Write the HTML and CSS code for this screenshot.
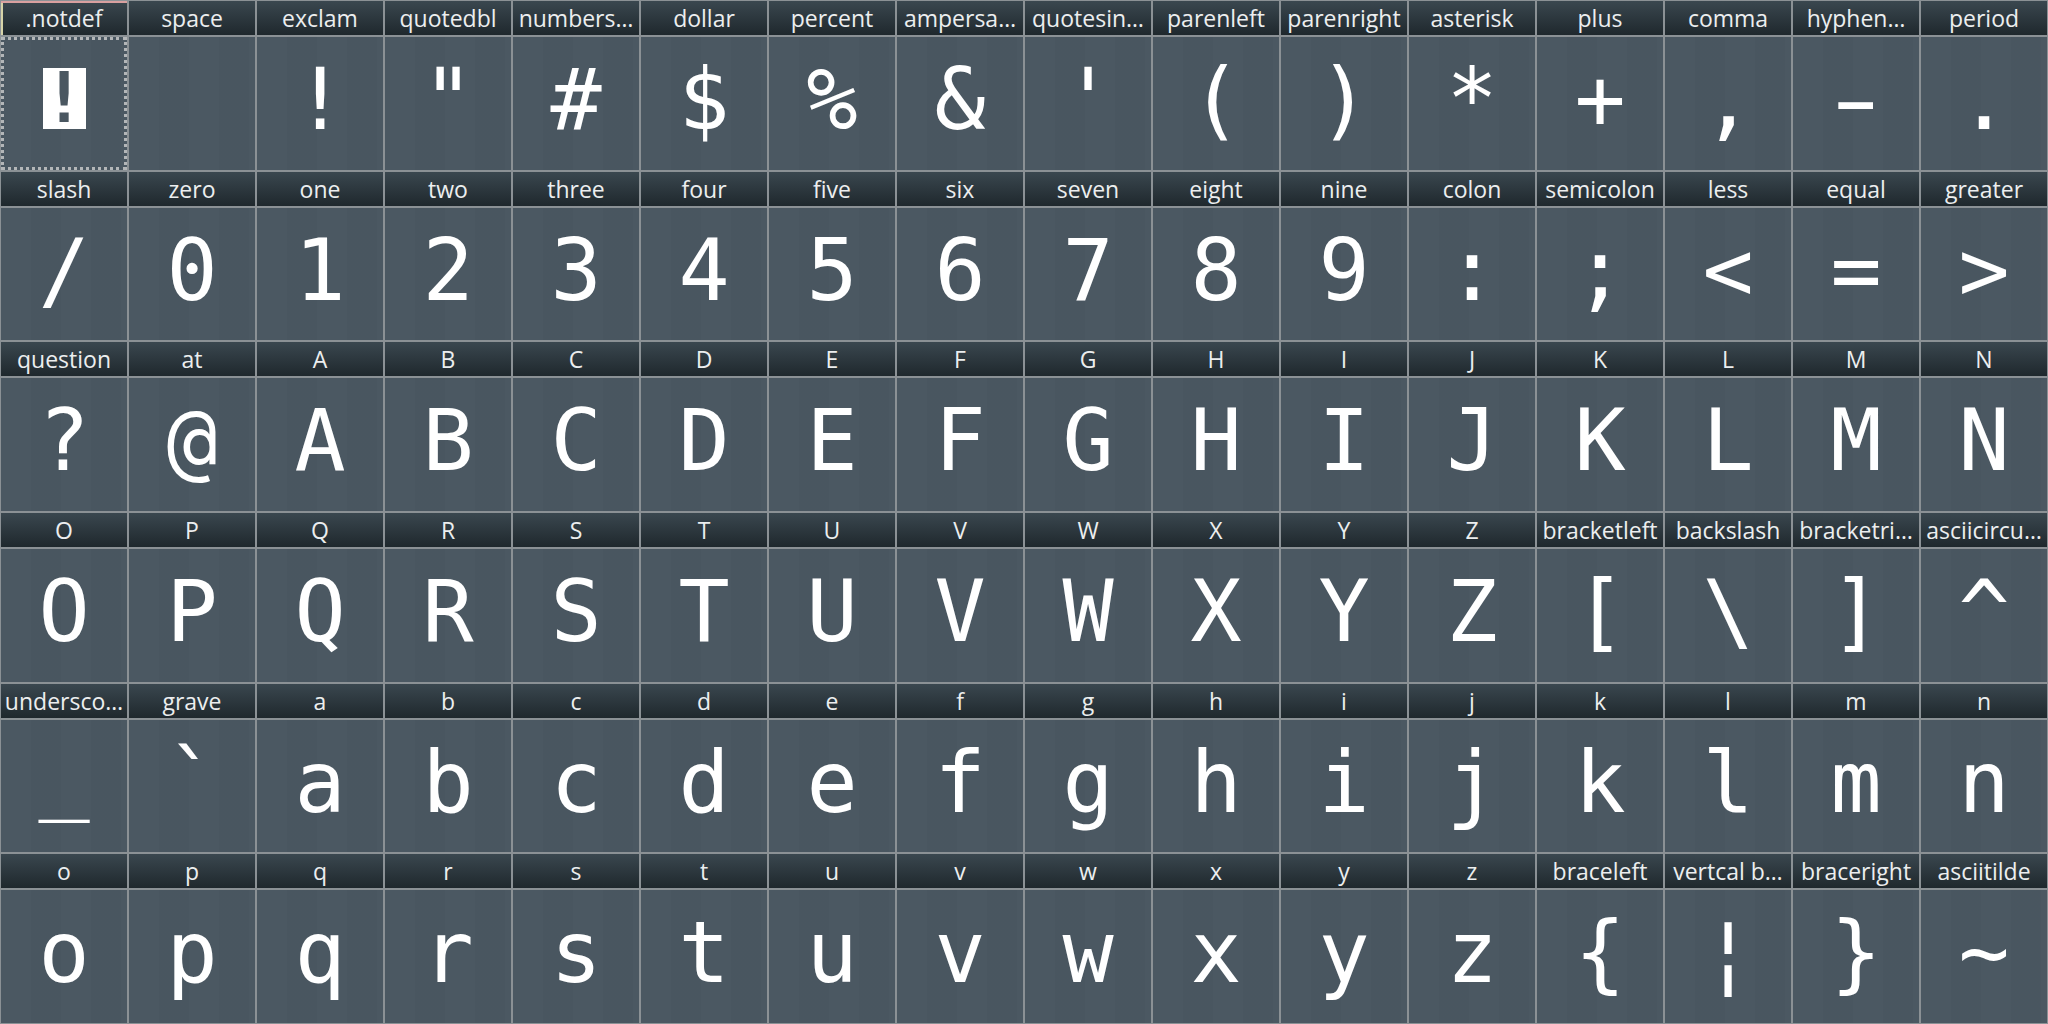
FILE: index.html
```html
<!DOCTYPE html>
<html lang="en">
<head>
<meta charset="utf-8">
<title>Glyph map</title>
<link rel="stylesheet" href="styles.css">
</head>
<body>
<div class="grid">
  <div class="cell sel"><div class="name">.notdef</div><div class="glyph glyph-notdef"><div class="notdef-box">!</div></div></div>
  <div class="cell"><div class="name">space</div><div class="glyph">&nbsp;</div></div>
  <div class="cell"><div class="name">exclam</div><div class="glyph">!</div></div>
  <div class="cell"><div class="name">quotedbl</div><div class="glyph">"</div></div>
  <div class="cell"><div class="name">numbers…</div><div class="glyph">#</div></div>
  <div class="cell"><div class="name">dollar</div><div class="glyph">$</div></div>
  <div class="cell"><div class="name">percent</div><div class="glyph">%</div></div>
  <div class="cell"><div class="name">ampersa…</div><div class="glyph">&amp;</div></div>
  <div class="cell"><div class="name">quotesin…</div><div class="glyph">'</div></div>
  <div class="cell"><div class="name">parenleft</div><div class="glyph">(</div></div>
  <div class="cell"><div class="name">parenright</div><div class="glyph">)</div></div>
  <div class="cell"><div class="name">asterisk</div><div class="glyph">*</div></div>
  <div class="cell"><div class="name">plus</div><div class="glyph">+</div></div>
  <div class="cell"><div class="name">comma</div><div class="glyph">,</div></div>
  <div class="cell"><div class="name">hyphen…</div><div class="glyph"><span class="wide">-</span></div></div>
  <div class="cell"><div class="name">period</div><div class="glyph">.</div></div>

  <div class="cell"><div class="name">slash</div><div class="glyph">/</div></div>
  <div class="cell"><div class="name">zero</div><div class="glyph">0</div></div>
  <div class="cell"><div class="name">one</div><div class="glyph">1</div></div>
  <div class="cell"><div class="name">two</div><div class="glyph">2</div></div>
  <div class="cell"><div class="name">three</div><div class="glyph">3</div></div>
  <div class="cell"><div class="name">four</div><div class="glyph">4</div></div>
  <div class="cell"><div class="name">five</div><div class="glyph">5</div></div>
  <div class="cell"><div class="name">six</div><div class="glyph">6</div></div>
  <div class="cell"><div class="name">seven</div><div class="glyph">7</div></div>
  <div class="cell"><div class="name">eight</div><div class="glyph">8</div></div>
  <div class="cell"><div class="name">nine</div><div class="glyph">9</div></div>
  <div class="cell"><div class="name">colon</div><div class="glyph">:</div></div>
  <div class="cell"><div class="name">semicolon</div><div class="glyph">;</div></div>
  <div class="cell"><div class="name">less</div><div class="glyph">&lt;</div></div>
  <div class="cell"><div class="name">equal</div><div class="glyph">=</div></div>
  <div class="cell"><div class="name">greater</div><div class="glyph">&gt;</div></div>

  <div class="cell"><div class="name">question</div><div class="glyph">?</div></div>
  <div class="cell"><div class="name">at</div><div class="glyph">@</div></div>
  <div class="cell"><div class="name">A</div><div class="glyph">A</div></div>
  <div class="cell"><div class="name">B</div><div class="glyph">B</div></div>
  <div class="cell"><div class="name">C</div><div class="glyph">C</div></div>
  <div class="cell"><div class="name">D</div><div class="glyph">D</div></div>
  <div class="cell"><div class="name">E</div><div class="glyph">E</div></div>
  <div class="cell"><div class="name">F</div><div class="glyph">F</div></div>
  <div class="cell"><div class="name">G</div><div class="glyph">G</div></div>
  <div class="cell"><div class="name">H</div><div class="glyph">H</div></div>
  <div class="cell"><div class="name">I</div><div class="glyph">I</div></div>
  <div class="cell"><div class="name">J</div><div class="glyph">J</div></div>
  <div class="cell"><div class="name">K</div><div class="glyph">K</div></div>
  <div class="cell"><div class="name">L</div><div class="glyph">L</div></div>
  <div class="cell"><div class="name">M</div><div class="glyph">M</div></div>
  <div class="cell"><div class="name">N</div><div class="glyph">N</div></div>

  <div class="cell"><div class="name">O</div><div class="glyph">O</div></div>
  <div class="cell"><div class="name">P</div><div class="glyph">P</div></div>
  <div class="cell"><div class="name">Q</div><div class="glyph">Q</div></div>
  <div class="cell"><div class="name">R</div><div class="glyph">R</div></div>
  <div class="cell"><div class="name">S</div><div class="glyph">S</div></div>
  <div class="cell"><div class="name">T</div><div class="glyph">T</div></div>
  <div class="cell"><div class="name">U</div><div class="glyph">U</div></div>
  <div class="cell"><div class="name">V</div><div class="glyph">V</div></div>
  <div class="cell"><div class="name">W</div><div class="glyph">W</div></div>
  <div class="cell"><div class="name">X</div><div class="glyph">X</div></div>
  <div class="cell"><div class="name">Y</div><div class="glyph">Y</div></div>
  <div class="cell"><div class="name">Z</div><div class="glyph">Z</div></div>
  <div class="cell"><div class="name">bracketleft</div><div class="glyph">[</div></div>
  <div class="cell"><div class="name">backslash</div><div class="glyph">\</div></div>
  <div class="cell"><div class="name">bracketri…</div><div class="glyph">]</div></div>
  <div class="cell"><div class="name">asciicircu…</div><div class="glyph">^</div></div>

  <div class="cell"><div class="name">undersco…</div><div class="glyph glyph-under">_</div></div>
  <div class="cell"><div class="name">grave</div><div class="glyph">`</div></div>
  <div class="cell"><div class="name">a</div><div class="glyph">a</div></div>
  <div class="cell"><div class="name">b</div><div class="glyph">b</div></div>
  <div class="cell"><div class="name">c</div><div class="glyph">c</div></div>
  <div class="cell"><div class="name">d</div><div class="glyph">d</div></div>
  <div class="cell"><div class="name">e</div><div class="glyph">e</div></div>
  <div class="cell"><div class="name">f</div><div class="glyph">f</div></div>
  <div class="cell"><div class="name">g</div><div class="glyph">g</div></div>
  <div class="cell"><div class="name">h</div><div class="glyph">h</div></div>
  <div class="cell"><div class="name">i</div><div class="glyph">i</div></div>
  <div class="cell"><div class="name">j</div><div class="glyph">j</div></div>
  <div class="cell"><div class="name">k</div><div class="glyph">k</div></div>
  <div class="cell"><div class="name">l</div><div class="glyph">l</div></div>
  <div class="cell"><div class="name">m</div><div class="glyph">m</div></div>
  <div class="cell"><div class="name">n</div><div class="glyph">n</div></div>

  <div class="cell"><div class="name">o</div><div class="glyph">o</div></div>
  <div class="cell"><div class="name">p</div><div class="glyph">p</div></div>
  <div class="cell"><div class="name">q</div><div class="glyph">q</div></div>
  <div class="cell"><div class="name">r</div><div class="glyph">r</div></div>
  <div class="cell"><div class="name">s</div><div class="glyph">s</div></div>
  <div class="cell"><div class="name">t</div><div class="glyph">t</div></div>
  <div class="cell"><div class="name">u</div><div class="glyph">u</div></div>
  <div class="cell"><div class="name">v</div><div class="glyph">v</div></div>
  <div class="cell"><div class="name">w</div><div class="glyph">w</div></div>
  <div class="cell"><div class="name">x</div><div class="glyph">x</div></div>
  <div class="cell"><div class="name">y</div><div class="glyph">y</div></div>
  <div class="cell"><div class="name">z</div><div class="glyph">z</div></div>
  <div class="cell"><div class="name">braceleft</div><div class="glyph">{</div></div>
  <div class="cell"><div class="name">vertcal b…</div><div class="glyph">¦</div></div>
  <div class="cell"><div class="name">braceright</div><div class="glyph">}</div></div>
  <div class="cell"><div class="name">asciitilde</div><div class="glyph">~</div></div>
</div>
</body>
</html>
```
FILE: styles.css
```css
html, body {
  margin: 0;
  padding: 0;
  background: #8b9195;
}

.grid {
  box-sizing: border-box;
  width: 2048px;
  height: 1024px;
  padding: 1px;
  display: grid;
  grid-template-columns: repeat(16, minmax(0, 1fr));
  grid-template-rows: repeat(6, minmax(0, 1fr));
  gap: 2px;
  background: #8b9195;
}

.cell {
  display: flex;
  flex-direction: column;
  gap: 2px;
  min-width: 0;
  min-height: 0;
}

.name {
  flex: none;
  height: 34px;
  background: linear-gradient(#3a474f, #1f282d);
  color: #eceeef;
  font-family: "Open Sans", "Noto Sans", sans-serif;
  font-size: 23px;
  line-height: 34px;
  text-align: center;
  white-space: nowrap;
  overflow: hidden;
}

.glyph {
  flex: 1;
  box-sizing: border-box;
  padding-top: 13px;
  background-color: #4a5761;
  background-image: repeating-linear-gradient(90deg,
    rgba(255, 255, 255, 0.008) 0 30px,
    rgba(0, 0, 0, 0.012) 30px 60px);
  color: #ffffff;
  font-family: "DejaVu Sans Mono", monospace;
  font-size: 85px;
  line-height: 100px;
  text-align: center;
  white-space: pre;
  overflow: hidden;
}

.glyph-under {
  padding-top: 4px;
}

.wide {
  display: inline-block;
  transform: scaleX(1.6);
}

.sel .name {
  box-shadow: inset 0 2px 0 #d9a0a0, inset 2px 0 0 #d6d3a8;
}

.sel .glyph {
  outline: 3px dotted #b3b6b8;
  outline-offset: -3px;
}

.glyph-notdef {
  padding-top: 31px;
}

.notdef-box {
  width: 43px;
  height: 61px;
  margin: 0 auto;
  background: #ffffff;
  color: #4a5761;
  font-family: "DejaVu Sans Mono", monospace;
  font-weight: bold;
  font-size: 70px;
  line-height: 61px;
  text-align: center;
}
```
